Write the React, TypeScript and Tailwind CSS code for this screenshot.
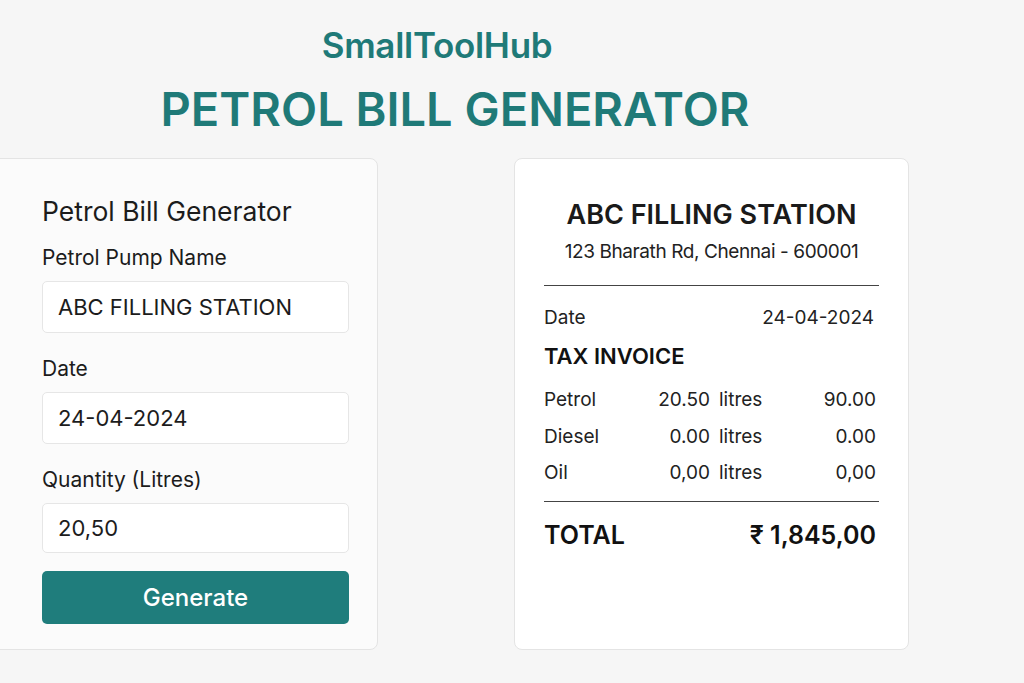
import React from "react";

const font = { fontFamily: "Inter, 'Noto Sans', sans-serif" };

function Label({ children }: { children: React.ReactNode }) {
  return <div className="text-[21px] leading-[26px] text-[#1c1c1c]">{children}</div>;
}

function Input({ value, h }: { value: string; h: string }) {
  return (
    <div
      className={`mt-[10px] ${h} w-[307px] rounded-[5px] border border-[#e6e6e6] bg-white pl-[15px] flex items-center text-[22px] text-[#1c1c1c]`}
    >
      {value}
    </div>
  );
}

function Row({ a, b, c }: { a: string; b: string; c: string }) {
  return (
    <div className="flex items-center h-[36.5px] text-[19px] text-[#222]">
      <div className="w-[90px]">{a}</div>
      <div className="w-[76px] text-right">{b}</div>
      <div className="ml-[9px] w-[60px]">litres</div>
      <div className="flex-1 text-right">{c}</div>
    </div>
  );
}

export default function App() {
  return (
    <div className="w-[1024px] h-[683px] overflow-hidden bg-[#f6f6f6]" style={font}>
      <div className="flex flex-col items-center">
        <div className="mt-[25px] ml-[-150px] text-[35px] leading-[40px] font-semibold text-[#1f7a78] tracking-[-0.3px]">
          SmallToolHub
        </div>
        <div className="mt-[17px] ml-[-114px] text-[47px] leading-[54px] font-semibold text-[#1f7a78]">
          PETROL BILL GENERATOR
        </div>
      </div>
      <div className="mt-[22px] flex">
        <div className="ml-[-22px] w-[400px] h-[492px] rounded-[8px] border border-[#e4e4e4] bg-[#fbfbfb] pl-[63px] pt-[36px]">
          <div className="text-[26.5px] leading-[32px] text-[#1c1c1c]">Petrol Bill Generator</div>
          <div className="mt-[18px]">
            <Label>Petrol Pump Name</Label>
            <Input value="ABC FILLING STATION" h="h-[52px]" />
          </div>
          <div className="mt-[23px]">
            <Label>Date</Label>
            <Input value="24-04-2024" h="h-[52px]" />
          </div>
          <div className="mt-[23px]">
            <Label>Quantity (Litres)</Label>
            <Input value="20,50" h="h-[50px]" />
          </div>
          <button className="mt-[18px] h-[53px] w-[307px] rounded-[5px] bg-[#1f7d7c] text-white text-[24px] font-medium">
            Generate
          </button>
        </div>
        <div className="ml-[136px] w-[395px] h-[492px] rounded-[8px] border border-[#e4e4e4] bg-white px-[29px] pt-[40px]">
          <div className="text-center text-[27px] leading-[32px] font-semibold text-[#1a1a1a]">ABC FILLING STATION</div>
          <div className="mt-[9px] text-center text-[19px] leading-[24px] text-[#222] tracking-[-0.4px]">
            123 Bharath Rd, Chennai - 600001
          </div>
          <div className="mt-[21px] border-t border-[#444]" />
          <div className="mt-[20px] flex justify-between pr-[5px] text-[19px] leading-[24px] text-[#222]">
            <span>Date</span>
            <span>24-04-2024</span>
          </div>
          <div className="mt-[12px] text-[22px] leading-[28px] font-semibold text-[#111]">TAX INVOICE</div>
          <div className="mt-[12px] pr-[3px]">
            <Row a="Petrol" b="20.50" c="90.00" />
            <Row a="Diesel" b="0.00" c="0.00" />
            <Row a="Oil" b="0,00" c="0,00" />
          </div>
          <div className="mt-[9px] border-t border-[#444]" />
          <div className="mt-[18px] flex justify-between items-center pr-[3px] text-[25px] leading-[30px] font-semibold text-[#111]">
            <span>TOTAL</span>
            <span>₹ 1,845,00</span>
          </div>
        </div>
      </div>
    </div>
  );
}
